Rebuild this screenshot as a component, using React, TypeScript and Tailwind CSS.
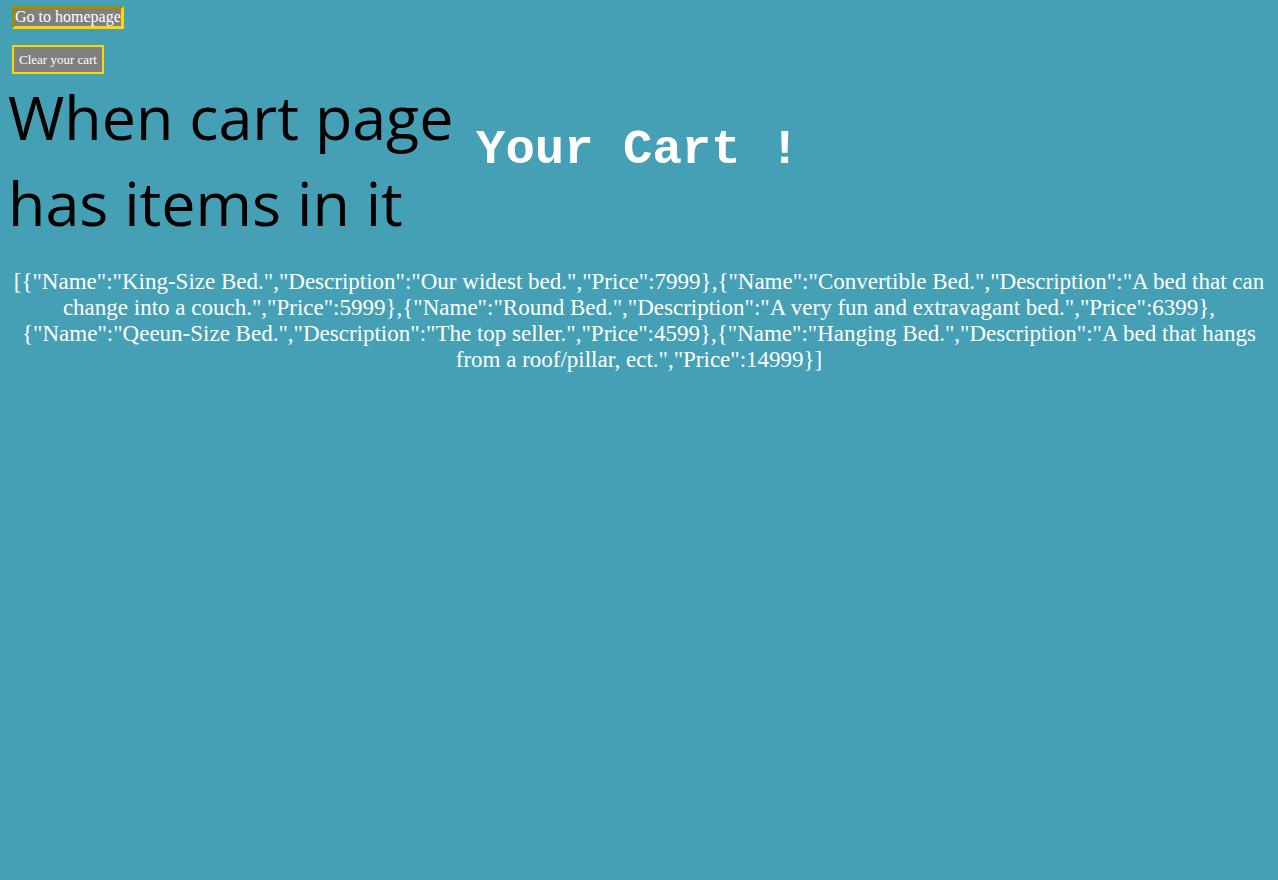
import React from 'react'

const items = [
  { Name: 'King-Size Bed.', Description: 'Our widest bed.', Price: 7999 },
  { Name: 'Convertible Bed.', Description: 'A bed that can change into a couch.', Price: 5999 },
  { Name: 'Round Bed.', Description: 'A very fun and extravagant bed.', Price: 6399 },
  { Name: 'Qeeun-Size Bed.', Description: 'The top seller.', Price: 4599 },
  { Name: 'Hanging Bed.', Description: 'A bed that hangs from a roof/pillar, ect.', Price: 14999 },
]

export default function App() {
  return (
    <div className="min-h-[880px] bg-[#45a0b5] px-2 pt-[4px]">
      <div className="pl-1">
        <button className="h-[23px] border-[3px] border-t-[#a08c00] border-l-[#a08c00] border-b-[#ffd700] border-r-[#ffd700] bg-[#808080] px-0 font-['Liberation_Serif',serif] text-[16px] leading-none text-white">
          Go to homepage
        </button>
      </div>
      <div className="mt-4 pl-1">
        <button className="h-[29px] border-2 border-[#ffd700] bg-[#808080] px-[5px] font-['Liberation_Serif',serif] text-[13px] leading-none text-white">
          Clear your cart
        </button>
      </div>
      <div className="flex items-center">
        <h1 className="w-[468px] font-['Open_Sans',sans-serif] text-[61px] font-normal leading-[86px] text-black">
          When cart page has items in it
        </h1>
        <h2 className="mb-[18px] font-['Liberation_Mono',monospace] text-[49px] font-bold text-white">
          Your Cart !
        </h2>
      </div>
      <p className="mt-[23px] text-center font-['Liberation_Serif',serif] text-[23px] leading-[26px] text-white">
        {JSON.stringify(items)}
      </p>
    </div>
  )
}
